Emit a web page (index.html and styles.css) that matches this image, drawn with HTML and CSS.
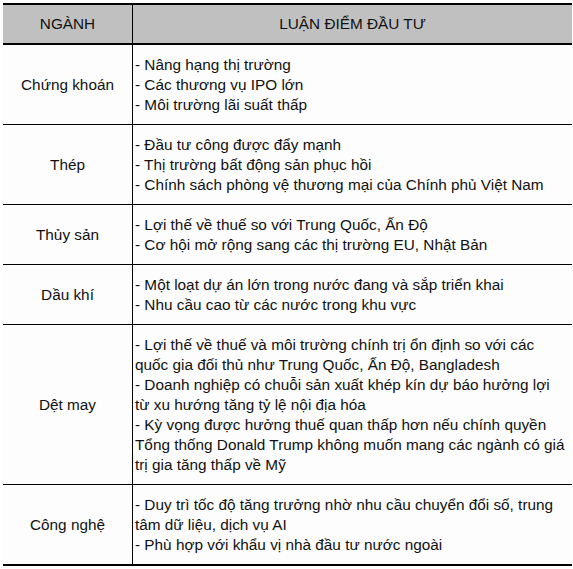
FILE: index.html
```html
<!DOCTYPE html>
<html lang="vi">
<head>
<meta charset="utf-8">
<link rel="stylesheet" href="styles.css">
</head>
<body>
<table class="grid">
  <thead>
    <tr><th class="sector">NGÀNH</th><th class="thesis">LUẬN ĐIỂM ĐẦU TƯ</th></tr>
  </thead>
  <tbody>
    <tr><td class="sector">Chứng khoán</td><td class="thesis">- Nâng hạng thị trường<br>- Các thương vụ IPO lớn<br>- Môi trường lãi suất thấp</td></tr>
    <tr><td class="sector">Thép</td><td class="thesis">- Đầu tư công được đẩy mạnh<br>- Thị trường bất động sản phục hồi<br>- Chính sách phòng vệ thương mại của Chính phủ Việt Nam</td></tr>
    <tr><td class="sector">Thủy sản</td><td class="thesis">- Lợi thế về thuế so với Trung Quốc, Ấn Độ<br>- Cơ hội mở rộng sang các thị trường EU, Nhật Bản</td></tr>
    <tr><td class="sector">Dầu khí</td><td class="thesis">- Một loạt dự án lớn trong nước đang và sắp triển khai<br>- Nhu cầu cao từ các nước trong khu vực</td></tr>
    <tr><td class="sector">Dệt may</td><td class="thesis">- Lợi thế về thuế và môi trường chính trị ổn định so với các quốc gia đối thủ như Trung Quốc, Ấn Độ, Bangladesh<br>- Doanh nghiệp có chuỗi sản xuất khép kín dự báo hưởng lợi từ xu hướng tăng tỷ lệ nội địa hóa<br>- Kỳ vọng được hưởng thuế quan thấp hơn nếu chính quyền Tổng thống Donald Trump không muốn mang các ngành có giá trị gia tăng thấp về Mỹ</td></tr>
    <tr><td class="sector">Công nghệ</td><td class="thesis">- Duy trì tốc độ tăng trưởng nhờ nhu cầu chuyển đổi số, trung tâm dữ liệu, dịch vụ AI<br>- Phù hợp với khẩu vị nhà đầu tư nước ngoài</td></tr>
  </tbody>
</table>
</body>
</html>
```
FILE: styles.css
```css
html, body {
  margin: 0;
  padding: 0;
  background: #ffffff;
}
body {
  padding: 3px 1px 0 3px;
  font-family: "Liberation Sans", Arial, sans-serif;
  font-size: 15.33px;
  color: #111;
}
.grid {
  width: 569px;
  border-collapse: collapse;
  table-layout: fixed;
  border-top: 2px solid #000;
  border-bottom: 2px solid #000;
}
.grid th {
  background: #c0c0c0;
  font-weight: normal;
  height: 38px;
  padding: 0;
  text-align: center;
  border-bottom: 2px solid #000;
  line-height: 20px;
}
.grid td {
  background: #fdfdfd;
  padding: 10px 2px 9px;
  line-height: 20px;
  vertical-align: middle;
  border-top: 1px solid #000;
}
.grid thead + tbody tr:first-child td {
  border-top: none;
}
.grid .sector {
  width: 129px;
  text-align: center;
  border-right: 1px solid #000;
}
.grid td.sector {
  padding: 0;
}
.grid td.thesis {
  text-align: left;
  padding-left: 2px;
  padding-right: 6px;
}
```
